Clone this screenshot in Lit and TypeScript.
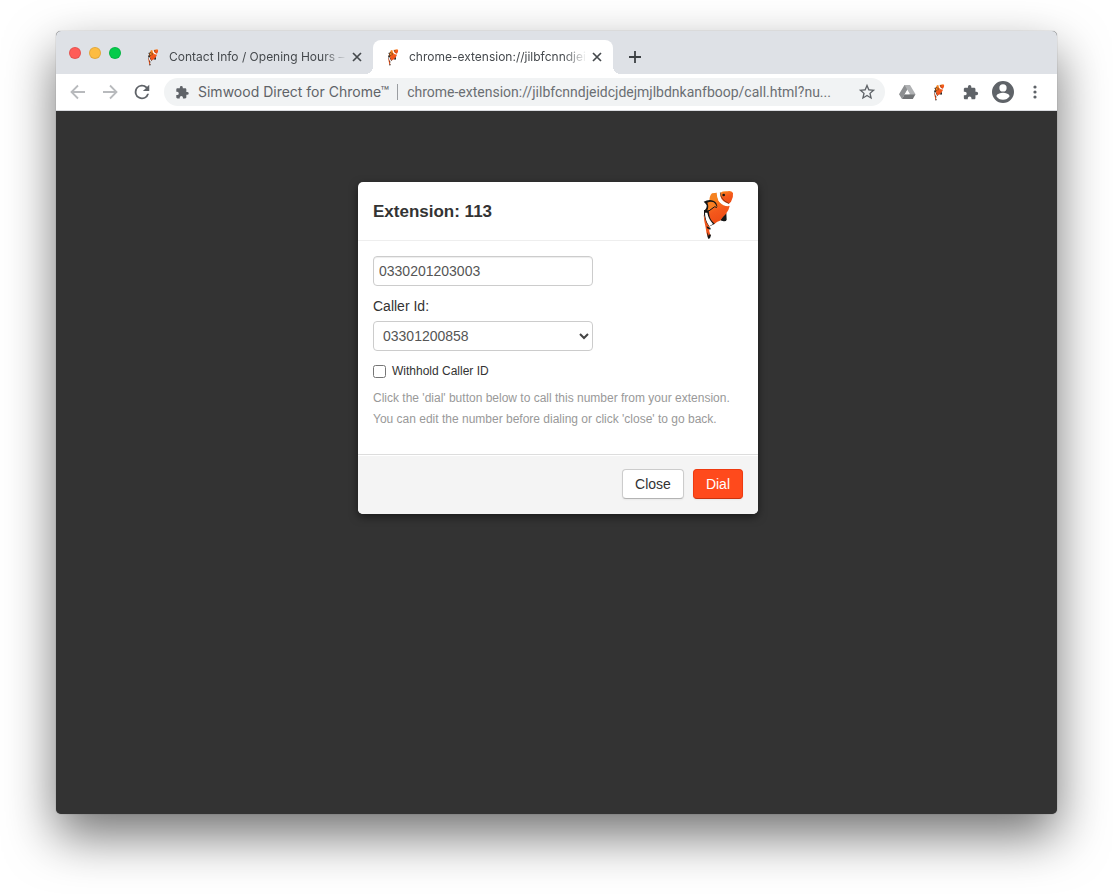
import { LitElement, html, svg, css } from "lit";
import { customElement, state } from "lit/decorators.js";

const puzzle = svg`<path d="M20.5 11H19V7c0-1.100-.9-2-2-2h-4V3.500a2.500 2.500 0 0 0-5 0V5H4c-1.100 0-2 .9-2 2v3.800h1.500a2.700 2.700 0 0 1 0 5.400H2V20c0 1.100.9 2 2 2h3.800v-1.500a2.700 2.700 0 0 1 5.400 0V22H17c1.100 0 2-.9 2-2v-4h1.500a2.500 2.500 0 0 0 0-5z"/>`;

@customElement("clown-fish")
class ClownFish extends LitElement {
  static styles = css`
    :host { display: block; }
    svg { display: block; width: 100%; height: 100%; }
  `;
  render() {
    return html`<svg viewBox="38 30 96 150" aria-hidden="true">
      <defs>
        <linearGradient id="body" x1="0" y1="0" x2="0.4" y2="1">
          <stop offset="0" stop-color="#f98a1c" />
          <stop offset="0.55" stop-color="#f4581c" />
          <stop offset="1" stop-color="#ee4c14" />
        </linearGradient>
      </defs>
      <path fill="#161616" d="M92 119L111 98L112 119Q110 126 100 123Q93 122 92 119Z" />
      <path fill="#f58220" d="M60 62Q61 46 68 40L83 38L88 66L66 70Z" />
      <path fill="#161616" d="M44 90Q42 125 58 140L77 131L58 92Z" />
      <path fill="#fff" d="M47 98Q47 121 60 139L71 132Q57 116 54 98Z" />
      <path fill="url(#body)" d="M60 66Q72 57 84 59Q96 74 121 78Q119 91 109 103Q99 112 92 122Q84 124 76 131Q60 119 59 99Q54 82 60 66Z" />
      <path fill="#fff" d="M82 38Q88 35 93 37Q95 56 119 69L117 79Q84 76 82 38Z" />
      <path fill="url(#body)" d="M93 38Q101 33 114 34Q126 31 131 39Q133 52 125 65L119 71Q97 66 93 48Z" />
      <path fill="none" stroke="#161616" stroke-width="1.500" d="M93 37Q92 58 119 71" />
      <circle cx="103" cy="45" r="4" fill="#161616" />
      <path fill="#161616" d="M43 65Q58 57 72 62Q84 67 84 82Q76 69 64 70Q69 85 60 92Q52 98 44 92Q53 86 52 76Q49 70 43 65Z" />
      <path fill="#f77f22" d="M54 68Q64 63 73 67Q80 72 82 81Q74 78 68 84Q63 92 53 92Q60 81 54 68Z" />
      <path fill="none" stroke="#161616" stroke-width="3" d="M83 82Q75 77 68 86Q60 96 47 93" />
      <path fill="#f0551b" d="M43 104L48 118Q51 131 60 140Q58 154 63 165L57 174Q50 160 49 143Q44 124 43 104Z" />
      <path fill="#161616" d="M52 139L64 144L63 149L53 145ZM54 156L58 167Q62 159 65 166Q64 174 58 177Q53 172 54 156Z" />
    </svg>`;
  }
}

@customElement("browser-tab")
class BrowserTab extends LitElement {
  static properties = { label: {}, active: { type: Boolean, reflect: true } };
  declare label: string;
  declare active: boolean;
  static styles = css`
    :host {
      position: relative;
      display: flex;
      align-items: center;
      gap: 8px;
      flex: 0 1 240px;
      min-width: 0;
      box-sizing: border-box;
      height: 34px;
      padding: 0 8px 0 12px;
      border-radius: 8px 8px 0 0;
      color: #45494d;
    }
    :host([active]) { background: #fff; }
    :host([active])::before,
    :host([active])::after {
      content: "";
      position: absolute;
      bottom: 0;
      width: 8px;
      height: 8px;
    }
    :host([active])::before { right: 100%; background: radial-gradient(circle at 0 0, transparent 8px, #fff 8px); }
    :host([active])::after { left: 100%; background: radial-gradient(circle at 100% 0, transparent 8px, #fff 8px); }
    clown-fish { flex: none; width: 16px; height: 17px; }
    .title {
      flex: 1;
      min-width: 0;
      margin-right: -6px;
      overflow: hidden;
      white-space: nowrap;
      font-size: 12px;
      line-height: 16px;
      -webkit-mask-image: linear-gradient(to left, transparent, #000 24px);
      mask-image: linear-gradient(to left, transparent, #000 24px);
    }
    button { flex: none; display: grid; place-items: center; width: 16px; height: 16px; padding: 0; border: 0; background: none; color: inherit; }
    svg { width: 10px; height: 10px; fill: none; stroke: currentColor; stroke-width: 1.700; }
  `;
  render() {
    return html`
      <clown-fish></clown-fish>
      <span class="title">${this.label}</span>
      <button aria-label="Close tab"><svg viewBox="0 0 10 10"><path d="M1 1L9 9M9 1L1 9" /></svg></button>
    `;
  }
}

@customElement("dial-dialog")
class DialDialog extends LitElement {
  @state() number = "0330201203003";
  static styles = css`
    :host {
      display: block;
      width: 100%;
      max-width: 400px;
      background: #fff;
      border-radius: 5px;
      box-shadow: 0 3px 9px rgba(0, 0, 0, 0.5);
      overflow: hidden;
      color: #333;
      font: 14px/20px "Liberation Sans", Arial, sans-serif;
    }
    header { display: flex; justify-content: space-between; align-items: flex-start; height: 58px; border-bottom: 1px solid #eee; padding: 0 24px 0 15px; }
    h1 { margin: 0; font-size: 17px; line-height: 60px; }
    clown-fish { width: 32px; height: 50px; margin-top: 8px; }
    .body { display: flex; flex-direction: column; align-items: flex-start; padding: 15px 15px 24px; }
    .field { box-sizing: border-box; width: 220px; height: 30px; border: 1px solid #ccc; border-radius: 4px; background: #fff; color: #555; font: inherit; }
    input.field { padding: 0 5px; margin: 0 0 10px; box-shadow: inset 0 1px 1px rgba(0, 0, 0, 0.075); }
    .select { display: grid; margin: 5px 0 10px; }
    .select > * { grid-area: 1 / 1; }
    select.field { appearance: none; margin: 0; padding: 0 24px 0 9px; }
    .select svg { justify-self: end; align-self: center; width: 10px; height: 7px; margin-right: 4px; fill: none; stroke: #444; stroke-width: 2; pointer-events: none; }
    .check { display: flex; align-items: center; gap: 6px; font-size: 12px; line-height: 21px; }
    .check input { width: 13px; height: 13px; margin: 0; }
    p { margin: 6px 0 0; color: #999; font-size: 12px; line-height: 21px; }
    footer { display: flex; justify-content: flex-end; gap: 9px; padding: 14px 15px 15px; background: #f4f4f4; border-top: 1px solid #ddd; box-shadow: inset 0 1px 0 #fff; }
    footer button { height: 30px; padding: 0 12px; border: 1px solid #ccc; border-bottom-color: #b3b3b3; border-radius: 4px; background: #fff; color: #333; font: inherit; box-shadow: 0 1px 2px rgba(0, 0, 0, 0.05); }
    footer .primary { background: #ff4a1c; border-color: #ee3a10 #ee3a10 #c8320e; color: #fff; }
  `;
  render() {
    return html`
      <header><h1>Extension: 113</h1><clown-fish></clown-fish></header>
      <div class="body">
        <input class="field" aria-label="Number" .value=${this.number}
          @input=${(e: Event) => (this.number = (e.target as HTMLInputElement).value)} />
        <label for="caller">Caller Id:</label>
        <div class="select">
          <select id="caller" class="field"><option>03301200858</option></select>
          <svg viewBox="0 0 10 7"><path d="M1 1L5 5L9 1" /></svg>
        </div>
        <label class="check"><input type="checkbox" />Withhold Caller ID</label>
        <p>Click the 'dial' button below to call this number from your extension.<br />You can edit the number before dialing or click 'close' to go back.</p>
      </div>
      <footer><button>Close</button><button class="primary">Dial</button></footer>
    `;
  }
}

@customElement("app-root")
class AppRoot extends LitElement {
  static styles = css`
    :host { display: flex; box-sizing: border-box; min-height: 100vh; padding: 31px 56px 80px; background: #fff; overflow: hidden; font-family: Inter, sans-serif; }
    .window { flex: 1; min-width: 0; display: flex; flex-direction: column; border-radius: 5px; background: #333; box-shadow: 0 0 1px rgba(0, 0, 0, 0.5), 0 22px 50px rgba(0, 0, 0, 0.55); }
    .strip { display: flex; align-items: flex-end; height: 43px; padding-left: 13px; background: #dee1e6; border-radius: 5px 5px 0 0; }
    .lights { display: flex; gap: 8px; margin-right: 12px; padding-bottom: 15px; }
    .light { box-sizing: border-box; width: 12px; height: 12px; border-radius: 50%; border: 1px solid rgba(0, 0, 0, 0.1); background: #ff5c58; }
    .light.min { background: #fdbc40; }
    .light.max { background: #05cb4b; }
    button { flex: none; display: grid; place-items: center; padding: 0; border: 0; background: none; color: #5f6368; }
    .new { width: 28px; height: 34px; margin-left: 8px; color: #3c4043; }
    .toolbar { display: flex; align-items: center; height: 36px; padding: 0 6px; background: #fff; border-bottom: 1px solid #dadce0; }
    .toolbar > button { width: 32px; height: 32px; }
    .toolbar > .off { color: #b8babd; }
    .omnibox { flex: 1; min-width: 0; display: flex; align-items: center; height: 28px; margin: 0 6px; padding: 0 9px 0 11px; border-radius: 14px; background: #f1f3f4; color: #5f6368; font-size: 14px; }
    .omnibox .name { margin-left: 8px; padding-bottom: 2px; white-space: nowrap; }
    .rule { flex: none; width: 1px; height: 16px; margin: 0 9px 0 8px; background: #9a9da1; }
    .omnibox input { flex: 1; min-width: 0; margin: 0 14px 0 0; padding: 0; border: 0; background: none; color: #6b6f73; font: 14px Roboto, sans-serif; outline: 0; }
    svg { display: block; flex: none; fill: currentColor; }
    .line { fill: none; stroke: currentColor; stroke-width: 1.800; }
    .ext { width: 16px; height: 17px; }
    .page { flex: 1; display: flex; justify-content: center; align-items: flex-start; padding: 71px 16px 16px; }
    dial-dialog { margin-left: 3px; }
  `;
  render() {
    return html`
      <div class="window">
        <div class="strip">
          <div class="lights"><span class="light"></span><span class="light min"></span><span class="light max"></span></div>
          <browser-tab label="Contact Info / Opening Hours –"></browser-tab>
          <browser-tab active label="chrome-extension://jilbfcnndjei"></browser-tab>
          <button class="new" aria-label="New tab"><svg class="line" width="12" height="12" viewBox="0 0 12 12"><path d="M6 0V12M0 6H12" /></svg></button>
        </div>
        <div class="toolbar">
          <button class="off" aria-label="Back"><svg class="line" width="16" height="16" viewBox="0 0 16 16"><path d="M15 8H2M8 1.500L1.500 8L8 14.500" /></svg></button>
          <button class="off" aria-label="Forward"><svg class="line" width="16" height="16" viewBox="0 0 16 16"><path d="M1 8H14M8 1.500L14.500 8L8 14.500" /></svg></button>
          <button aria-label="Reload"><svg width="20" height="20" viewBox="1 1 22 22"><path d="M17.650 6.350A8 8 0 1 0 19.730 14h-2.080A6 6 0 1 1 12 6c1.660 0 3.140.690 4.220 1.780L13 11h7V4z" /></svg></button>
          <div class="omnibox">
            <svg width="15" height="13" viewBox="1 1 23 22">${puzzle}</svg>
            <span class="name">Simwood Direct for Chrome™</span><span class="rule"></span>
            <input aria-label="Address" value="chrome-extension://jilbfcnndjeidcjdejmjlbdnkanfboop/call.html?nu..." />
            <button aria-label="Bookmark"><svg width="18" height="18" viewBox="1 1 22 22"><path d="M22 9.240l-7.190-.620L12 2 9.190 8.630 2 9.240l5.460 4.730L5.820 21 12 17.270 18.180 21l-1.630-7.030L22 9.240zM12 15.400l-3.760 2.270 1-4.280-3.320-2.880 4.380-.380L12 6.100l1.710 4.040 4.380.380-3.320 2.880 1 4.280L12 15.400z" /></svg></button>
          </div>
          <button aria-label="Drive"><svg width="17" height="16" viewBox="0 0 17 16"><path fill="#8d8f91" d="M5.500 1H11L5.500 10.500L3 15L0 10.200Z" /><path fill="#b0b2b4" d="M5.500 1H11L16.500 10.200H11Z" /><path fill="#727476" d="M3 15L5.700 10.200H16.500L13.800 15Z" /><path fill="#fff" d="M8.300 6.500L10.500 10.200H6.100Z" /></svg></button>
          <button aria-label="Simwood"><clown-fish class="ext"></clown-fish></button>
          <button aria-label="Extensions"><svg width="16" height="15" viewBox="1 1 23 22">${puzzle}</svg></button>
          <button aria-label="Profile"><svg width="22" height="22" viewBox="2 2 20 20"><path d="M12 2a10 10 0 1 0 0 20 10 10 0 0 0 0-20zm0 3a3.300 3.300 0 1 1 0 6.600A3.300 3.300 0 0 1 12 5zm0 14a7.200 7.200 0 0 1-6-3.200c0-2 4-3.100 6-3.100s6 1.100 6 3.100a7.200 7.200 0 0 1-6 3.200z" /></svg></button>
          <button aria-label="Menu"><svg width="4" height="14" viewBox="0 0 4 14"><circle cx="2" cy="2" r="1.600" /><circle cx="2" cy="7" r="1.600" /><circle cx="2" cy="12" r="1.600" /></svg></button>
        </div>
        <div class="page"><dial-dialog></dial-dialog></div>
      </div>
    `;
  }
}
